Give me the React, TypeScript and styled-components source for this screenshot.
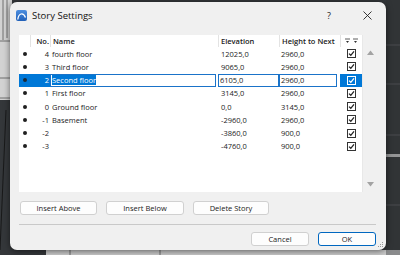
import React from "react";
import styled, { createGlobalStyle } from "styled-components";

const GlobalStyle = createGlobalStyle`
  html, body { margin: 0; padding: 0; }
  body {
    width: 400px; height: 255px; overflow: hidden;
    background: #34373a;
    font-family: "Open Sans", "Noto Sans", sans-serif;
    color: #1b1b1b;
  }
`;

const Desktop = styled.div`
  position: relative;
  width: 400px;
  height: 255px;
  overflow: hidden;
  box-sizing: border-box;
  padding: 2px 14px 5px 10px;
`;

const Backdrop = styled.svg`
  position: absolute;
  left: 0;
  top: 0;
  width: 400px;
  height: 255px;
`;

const Dialog = styled.div`
  position: relative;
  width: 376px;
  height: 248px;
  box-sizing: border-box;
  background: #f0f0f0;
  border-radius: 7px;
  box-shadow: 0 1px 6px rgba(0, 0, 0, 0.55);
  display: flex;
  flex-direction: column;
`;

const TitleBar = styled.div`
  height: 26px;
  display: flex;
  align-items: center;
  padding-left: 6px;
  padding-right: 14px;
`;

const Title = styled.span`
  margin-left: 5px;
  font-size: 9.5px;
  color: #111;
  flex: 1;
`;

const HelpGlyph = styled.span`
  font-size: 9px;
  color: #222;
  margin-right: 32px;
`;

const Content = styled.div`
  padding: 7px 8px 0 9px;
  display: flex;
  flex-direction: column;
`;

const ListBox = styled.div`
  width: 359px;
  height: 157px;
  background: #fff;
  display: flex;
`;

const Table = styled.div`
  width: 343px;
  display: flex;
  flex-direction: column;
`;

const cols = "11px 20px 168px 61px 61px 22px";

const HeaderRow = styled.div`
  display: grid;
  grid-template-columns: ${cols};
  height: 12px;
  font-size: 7.5px;
  font-weight: 600;
  color: #222;
`;

const HeaderCell = styled.div<{ $align?: string; $pad?: number; $sep?: boolean }>`
  display: flex;
  align-items: center;
  justify-content: ${(p) => p.$align || "flex-start"};
  padding-left: ${(p) => p.$pad ?? 0}px;
  padding-right: ${(p) => (p.$align === "flex-end" ? 1 : 0)}px;
  border-left: ${(p) => (p.$sep ? "1px solid #e3e3e3" : "none")};
  box-sizing: border-box;
  white-space: nowrap;
`;

const Row = styled.div<{ $selected?: boolean }>`
  display: grid;
  grid-template-columns: ${cols};
  height: 13.25px;
  font-size: 7.5px;
  color: #1b1b1b;
`;

const Cell = styled.div<{ $align?: string; $pad?: number; $blue?: boolean }>`
  display: flex;
  align-items: center;
  justify-content: ${(p) => p.$align || "flex-start"};
  padding-left: ${(p) => p.$pad ?? 0}px;
  padding-right: ${(p) => (p.$align === "flex-end" ? 1 : 0)}px;
  background: ${(p) => (p.$blue ? "#0078d7" : "transparent")};
  color: ${(p) => (p.$blue ? "#fff" : "inherit")};
  box-sizing: border-box;
  white-space: nowrap;
`;

const Bullet = styled.span<{ $light?: boolean }>`
  width: 4px;
  height: 4px;
  border-radius: 50%;
  background: ${(p) => (p.$light ? "#1b2a38" : "#1f1f1f")};
`;

const EditBox = styled.div<{ $w: number }>`
  width: ${(p) => p.$w}px;
  height: 100%;
  box-sizing: border-box;
  border: 1px solid #1a73c9;
  background: #fff;
  display: flex;
  align-items: center;
  padding-left: 1px;
`;

const Highlight = styled.span`
  background: #0078d7;
  color: #fff;
  line-height: 10px;
`;

const CheckBox = styled.span<{ $inverse?: boolean }>`
  width: 9px;
  height: 9px;
  box-sizing: border-box;
  border: 1px solid ${(p) => (p.$inverse ? "#fff" : "#333")};
  background: ${(p) => (p.$inverse ? "#0078d7" : "#fff")};
  display: flex;
  align-items: center;
  justify-content: center;
`;

const ScrollBar = styled.div`
  width: 16px;
  background: #f0f0f0;
  display: flex;
  flex-direction: column;
  align-items: center;
  justify-content: space-between;
  padding: 15px 0 5px;
  box-sizing: border-box;
  border-left: 1px solid #e8e8e8;
`;

const ActionRow = styled.div`
  display: flex;
  gap: 9px;
  margin-top: 9px;
  margin-left: 1px;
`;

const Button = styled.div<{ $w: number; $default?: boolean }>`
  width: ${(p) => p.$w}px;
  height: 14px;
  box-sizing: border-box;
  border: 1px solid ${(p) => (p.$default ? "#0067c0" : "#d0d0d0")};
  border-radius: 3px;
  background: #fdfdfd;
  font-size: 7.5px;
  color: #1b1b1b;
  display: flex;
  align-items: center;
  justify-content: center;
`;

const Separator = styled.div`
  height: 1px;
  width: 357px;
  background: #c9c9c9;
  margin-top: 9px;
`;

const FooterRow = styled.div`
  display: flex;
  justify-content: flex-end;
  gap: 9px;
  margin-top: 7px;
  width: 357px;
`;

const Grip = styled.svg`
  position: absolute;
  right: 2px;
  bottom: 2px;
`;

type Story = { no: string; name: string; elev: string; h: string; sel?: boolean };

const stories: Story[] = [
  { no: "4", name: "fourth floor", elev: "12025,0", h: "2960,0" },
  { no: "3", name: "Third floor", elev: "9065,0", h: "2960,0" },
  { no: "2", name: "Second floor", elev: "6105,0", h: "2960,0", sel: true },
  { no: "1", name: "First floor", elev: "3145,0", h: "2960,0" },
  { no: "0", name: "Ground floor", elev: "0,0", h: "3145,0" },
  { no: "-1", name: "Basement", elev: "-2960,0", h: "2960,0" },
  { no: "-2", name: "", elev: "-3860,0", h: "900,0" },
  { no: "-3", name: "", elev: "-4760,0", h: "900,0" },
];

const Check = ({ color }: { color: string }) => (
  <svg width="7" height="7" viewBox="0 0 7 7">
    <path d="M1 3.6 L2.8 5.3 L6 1.4" fill="none" stroke={color} strokeWidth="1.3" />
  </svg>
);

const AppIcon = () => (
  <svg width="11" height="11" viewBox="0 0 11 11">
    <defs>
      <linearGradient id="ic" x1="0" y1="0" x2="0" y2="1">
        <stop offset="0" stopColor="#4d8fe0" />
        <stop offset="1" stopColor="#2160b8" />
      </linearGradient>
    </defs>
    <rect x="0" y="0" width="11" height="11" rx="2" fill="url(#ic)" />
    <path d="M1.8 9.5 C2.5 3.5 7 1.5 9.5 7.5" fill="none" stroke="#fff" strokeWidth="1.3" />
  </svg>
);

const CloseIcon = () => (
  <svg width="9" height="9" viewBox="0 0 9 9">
    <path d="M0.5 0.5 L8.5 8.5 M8.5 0.5 L0.5 8.5" stroke="#222" strokeWidth="0.9" />
  </svg>
);

const SortIcon = () => (
  <svg width="14" height="6" viewBox="0 0 14 6">
    <path d="M0 1 H5 M8 1 H13" stroke="#333" strokeWidth="0.8" />
    <path d="M1 3 L4 3 L2.5 5 Z M9 3 L12 3 L10.5 5 Z" fill="#333" />
  </svg>
);

const Arrow = ({ up }: { up?: boolean }) => (
  <svg width="7" height="5" viewBox="0 0 7 5">
    <path d={up ? "M0 5 L3.5 0.5 L7 5 Z" : "M0 0 L3.5 4.5 L7 0 Z"} fill="#a3a3a3" />
  </svg>
);

export default function App() {
  return (
    <>
      <GlobalStyle />
      <Desktop>
        <Backdrop viewBox="0 0 400 255">
          <rect x="0" y="0" width="400" height="255" fill="#34373a" />
          <rect x="0" y="0" width="12" height="100" fill="#d2d2d2" />
          <path d="M3 0 V40 M7 0 V38 M0 41 H12 M0 78 H12 M0 98 H12" stroke="#555" strokeWidth="0.8" />
          <path d="M0 250 L6 110" stroke="#111" strokeWidth="0.8" />
          <rect x="46" y="250" width="354" height="5" fill="#c9c9c9" />
          <path d="M70 250 V255 M160 250 V255" stroke="#555" strokeWidth="0.8" />
          <path d="M384 45 H400 M384 84 H400 M384 135 H400 M384 205 H400" stroke="#5c5f62" strokeWidth="1" />
          <rect x="384" y="154" width="16" height="3" fill="#d9d9d9" />
          <rect x="386" y="0" width="14" height="255" fill="#2d3033" opacity="0.4" />
        </Backdrop>
        <Dialog>
          <TitleBar>
            <AppIcon />
            <Title>Story Settings</Title>
            <HelpGlyph>?</HelpGlyph>
            <CloseIcon />
          </TitleBar>
          <Content>
            <ListBox>
              <Table>
                <HeaderRow>
                  <HeaderCell />
                  <HeaderCell $align="flex-end" $sep>No.</HeaderCell>
                  <HeaderCell $pad={2} $sep>Name</HeaderCell>
                  <HeaderCell $pad={2} $sep>Elevation</HeaderCell>
                  <HeaderCell $pad={2} $sep>Height to Next</HeaderCell>
                  <HeaderCell $align="center" $sep>
                    <SortIcon />
                  </HeaderCell>
                </HeaderRow>
                {stories.map((s) => (
                  <Row key={s.no} $selected={s.sel}>
                    <Cell $align="center" $blue={s.sel}>
                      <Bullet $light={s.sel} />
                    </Cell>
                    <Cell $align="flex-end" $blue={s.sel}>{s.no}</Cell>
                    {s.sel ? (
                      <>
                        <Cell>
                          <EditBox $w={166}>
                            <Highlight>{s.name}</Highlight>
                          </EditBox>
                        </Cell>
                        <Cell>
                          <EditBox $w={62}>{s.elev}</EditBox>
                        </Cell>
                        <Cell>
                          <EditBox $w={58}>{s.h}</EditBox>
                        </Cell>
                        <Cell $align="center" $blue>
                          <CheckBox $inverse>
                            <Check color="#fff" />
                          </CheckBox>
                        </Cell>
                      </>
                    ) : (
                      <>
                        <Cell $pad={2}>{s.name}</Cell>
                        <Cell $pad={3}>{s.elev}</Cell>
                        <Cell $pad={2}>{s.h}</Cell>
                        <Cell $align="center">
                          <CheckBox>
                            <Check color="#222" />
                          </CheckBox>
                        </Cell>
                      </>
                    )}
                  </Row>
                ))}
              </Table>
              <ScrollBar>
                <Arrow up />
                <Arrow />
              </ScrollBar>
            </ListBox>
            <ActionRow>
              <Button $w={77}>Insert Above</Button>
              <Button $w={78}>Insert Below</Button>
              <Button $w={76}>Delete Story</Button>
            </ActionRow>
            <Separator />
            <FooterRow>
              <Button $w={58}>Cancel</Button>
              <Button $w={58} $default>OK</Button>
            </FooterRow>
          </Content>
          <Grip width="6" height="6" viewBox="0 0 6 6">
            <g fill="#9a9a9a">
              <rect x="4" y="0" width="1" height="1" />
              <rect x="2" y="2" width="1" height="1" />
              <rect x="4" y="2" width="1" height="1" />
              <rect x="0" y="4" width="1" height="1" />
              <rect x="2" y="4" width="1" height="1" />
              <rect x="4" y="4" width="1" height="1" />
            </g>
          </Grip>
        </Dialog>
      </Desktop>
    </>
  );
}
